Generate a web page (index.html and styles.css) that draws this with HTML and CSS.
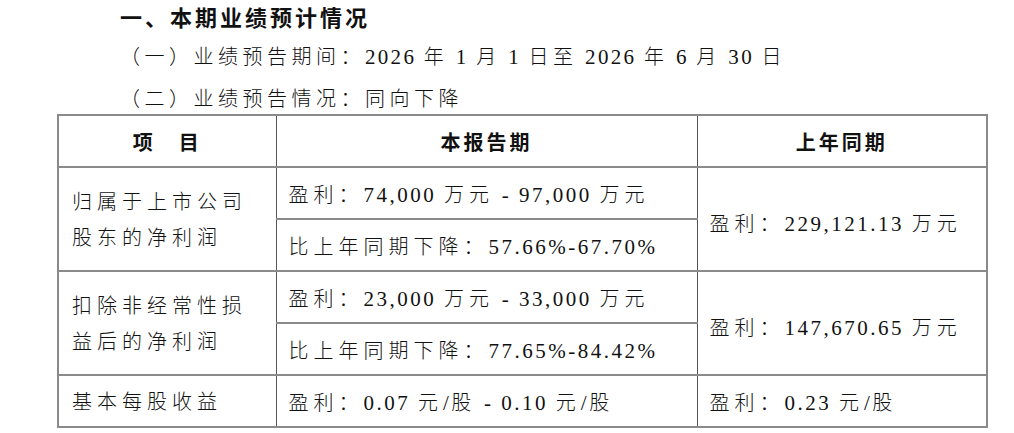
FILE: index.html
```html
<!DOCTYPE html>
<html lang="zh-CN">
<head>
<meta charset="utf-8">
<title>本期业绩预计情况</title>
<link rel="stylesheet" href="styles.css">
</head>
<body>
<div class="page">
  <div class="heading">
    <h1 class="title">一、本期业绩预计情况</h1>
    <p class="sub sub-first">（一）业绩预告期间：<span class="num">2026 </span>年<span class="num"> 1 </span>月<span class="num"> 1 </span>日至<span class="num"> 2026 </span>年<span class="num"> 6 </span>月<span class="num"> 30 </span>日</p>
    <p class="sub sub-second">（二）业绩预告情况：同向下降</p>
  </div>
  <table class="data">
    <colgroup>
      <col class="c1">
      <col class="c2">
      <col class="c3">
    </colgroup>
    <thead>
      <tr>
        <th>项　目</th>
        <th>本报告期</th>
        <th>上年同期</th>
      </tr>
    </thead>
    <tbody>
      <tr>
        <td rowspan="2" class="item">归属于上市公司<br>股东的净利润</td>
        <td>盈利：<span class="num">74,000 </span>万元<span class="num"> - 97,000 </span>万元</td>
        <td rowspan="2" class="last">盈利：<span class="num">229,121.13 </span>万元</td>
      </tr>
      <tr>
        <td>比上年同期下降：<span class="num">57.66%-67.70%</span></td>
      </tr>
      <tr>
        <td rowspan="2" class="item">扣除非经常性损<br>益后的净利润</td>
        <td>盈利：<span class="num">23,000 </span>万元<span class="num"> - 33,000 </span>万元</td>
        <td rowspan="2" class="last">盈利：<span class="num">147,670.65 </span>万元</td>
      </tr>
      <tr>
        <td>比上年同期下降：<span class="num">77.65%-84.42%</span></td>
      </tr>
      <tr>
        <td class="item">基本每股收益</td>
        <td>盈利：<span class="num">0.07 </span>元<span class="num">/</span>股<span class="num"> - 0.10 </span>元<span class="num">/</span>股</td>
        <td>盈利：<span class="num">0.23 </span>元<span class="num">/</span>股</td>
      </tr>
    </tbody>
  </table>
</div>
</body>
</html>
```

FILE: styles.css
```css
html, body {
  margin: 0;
  padding: 0;
  background: #ffffff;
}

body {
  font-family: "Noto Sans CJK SC", sans-serif;
  color: #111111;
}

.page {
  width: 1014px;
  height: 433px;
  overflow: hidden;
}

.heading {
  padding-left: 120px;
}

.title {
  margin: 0;
  height: 32px;
  line-height: 32px;
  font-size: 22px;
  font-weight: 700;
  letter-spacing: 3px;
}

.sub {
  margin: 0;
  font-size: 20px;
  letter-spacing: 4.5px;
  font-weight: 300;
}

.sub .num {
  letter-spacing: 2.3px;
}

.sub-first {
  margin-top: 4px;
  line-height: 40px;
}

.sub-second {
  margin-top: 5px;
  line-height: 32px;
}

.num {
  font-family: "Liberation Serif", serif;
  font-size: 21px;
  letter-spacing: 2.5px;
  font-weight: 400;
}

.data {
  margin-left: 57px;
  border-collapse: collapse;
  table-layout: fixed;
  width: 929px;
  font-size: 20px;
  letter-spacing: 5px;
  border: 2px solid #8a8a8a;
}

.c1 { width: 218px; }
.c2 { width: 421px; }
.c3 { width: 290px; }

.data th,
.data td {
  border-top: 2px solid #8a8a8a;
  border-bottom: 2px solid #8a8a8a;
  border-left: 1px solid #555555;
  border-right: 1px solid #555555;
  height: 50px;
  padding: 0 0 0 12px;
  text-align: left;
  vertical-align: middle;
  white-space: nowrap;
  font-weight: 300;
}

.data th {
  padding: 0;
  text-align: center;
  font-weight: 700;
  letter-spacing: 3px;
}

.data td.item {
  line-height: 36px;
  padding-left: 13px;
}

.data td.last {
  padding-top: 6px;
}
```
